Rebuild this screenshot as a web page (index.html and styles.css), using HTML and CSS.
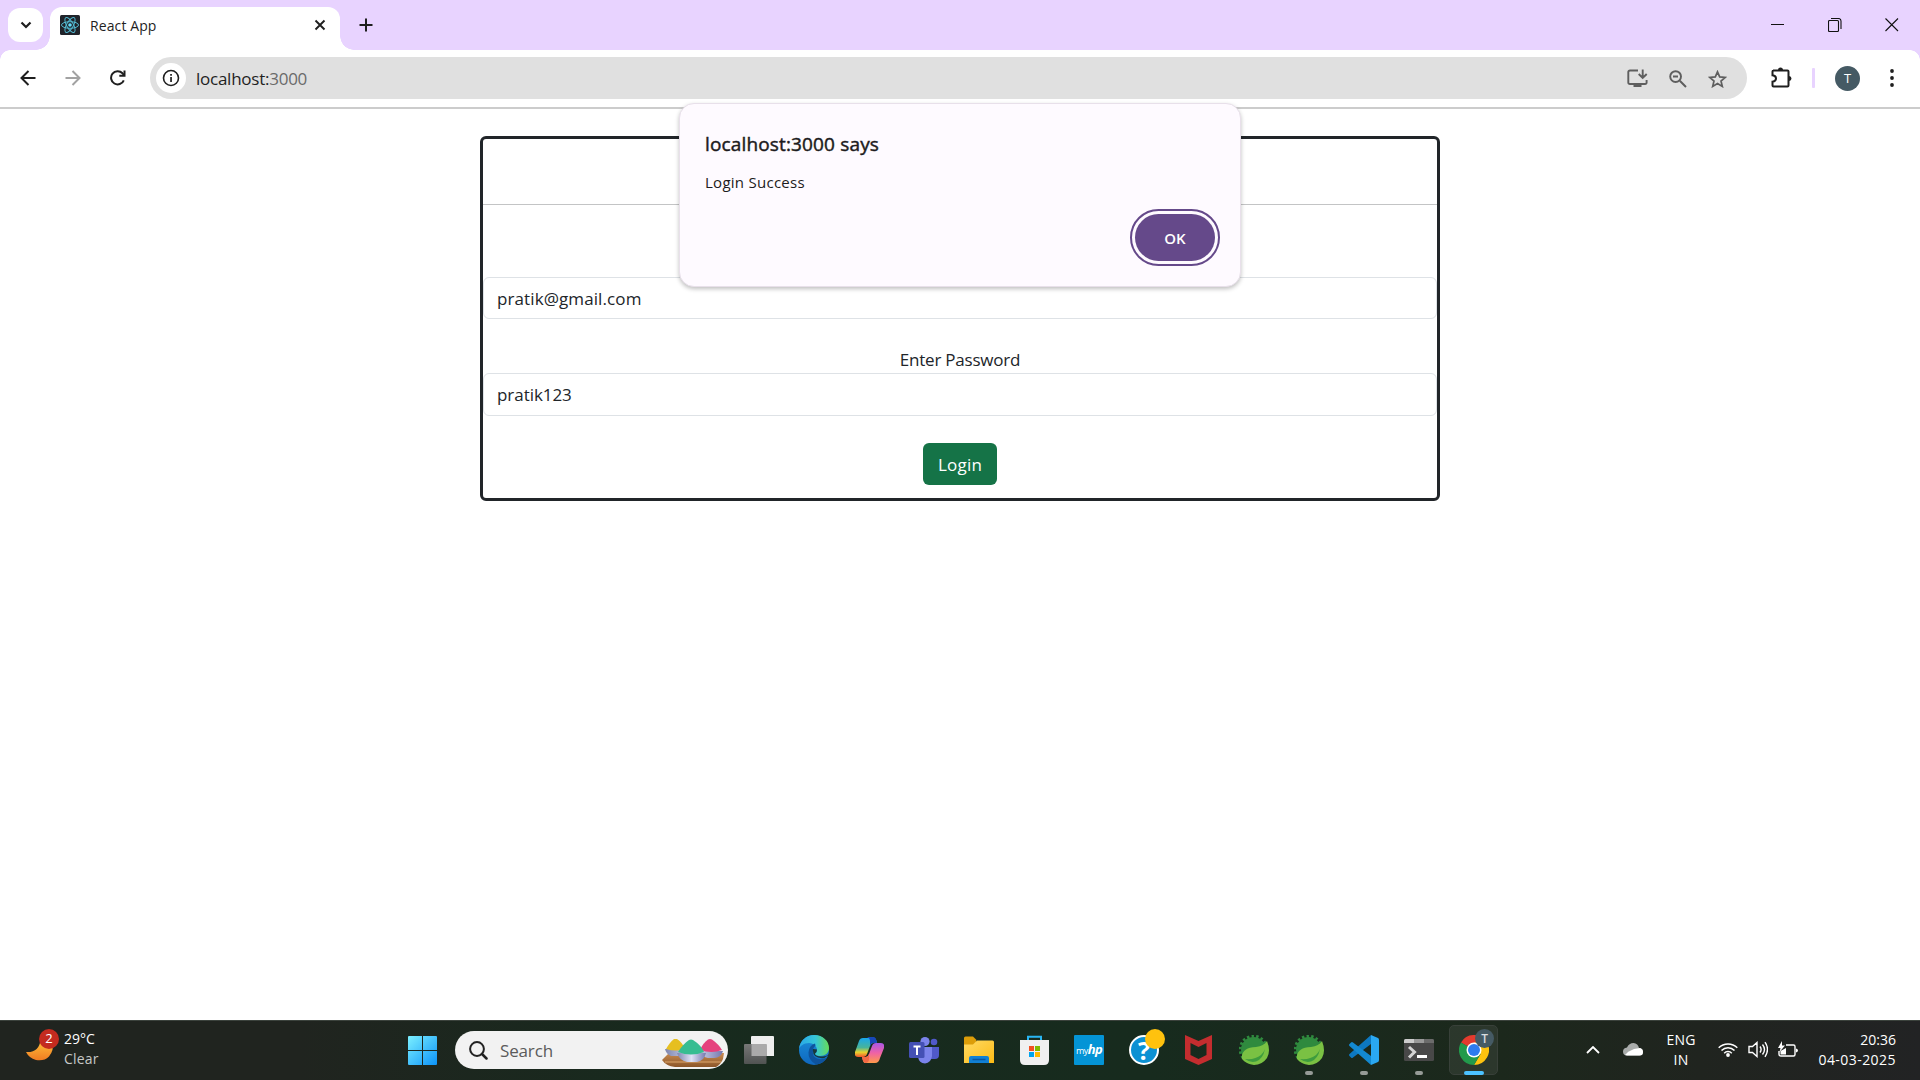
FILE: index.html
```html
<!DOCTYPE html>
<html lang="en">
<head>
<meta charset="utf-8">
<title>React App</title>
<link rel="stylesheet" href="styles.css">
</head>
<body>
<div class="screen">
  <header class="tabstrip">
    <button class="tab-search" aria-label="Search tabs"><svg width="12" height="8" viewBox="0 0 12 8"><path d="M1.5 1.5 6 6l4.500-4.500" fill="none" stroke="#1f1f1f" stroke-width="2.200"/></svg></button>
    <div class="tab">
      <svg class="favicon" width="20" height="20" viewBox="0 0 20 20"><rect width="20" height="20" rx="1.500" fill="#20232a"/><g fill="none" stroke="#53b9d1" stroke-width="1"><ellipse cx="10" cy="10" rx="8.500" ry="3.300"/><ellipse cx="10" cy="10" rx="8.500" ry="3.300" transform="rotate(60 10 10)"/><ellipse cx="10" cy="10" rx="8.500" ry="3.300" transform="rotate(120 10 10)"/></g><circle cx="10" cy="10" r="1.800" fill="#61dafb"/></svg>
      <span class="tab-title">React App</span>
      <svg class="tab-close" width="12" height="12" viewBox="0 0 12 12"><path d="M1.500 1.500l9 9m0-9l-9 9" stroke="#1f1f1f" stroke-width="1.900"/></svg>
    </div>
    <svg class="tab-new" width="14" height="14" viewBox="0 0 14 14"><path d="M7 .5v13M.5 7h13" stroke="#1f1f1f" stroke-width="2"/></svg>
    <div class="window-buttons">
      <svg width="14" height="14" viewBox="0 0 14 14"><path d="M0 6.500h13" stroke="#111" stroke-width="1"/></svg>
      <svg width="14" height="14" viewBox="0 0 14 14"><path d="M.5 3.500q0-1 1-1h8q1 0 1 1v9q0 1-1 1h-8q-1 0-1-1zM3 .5h7.500q2.500 0 2.500 2.500v8" fill="none" stroke="#111" stroke-width="1.100"/></svg>
      <svg width="14" height="14" viewBox="0 0 14 14"><path d="M.5.5l12.500 12.500m0-12.500L.5 13" stroke="#111" stroke-width="1.100"/></svg>
    </div>
  </header>
  <nav class="toolbar">
    <svg class="nav-icon" width="16" height="16" viewBox="0 0 16 16"><path d="M15.500 8H2M8.500 1 1.500 8l7 7" fill="none" stroke="#1f1f1f" stroke-width="2"/></svg>
    <svg class="nav-icon" width="16" height="16" viewBox="0 0 16 16"><path d="M.5 8H14M7.500 1l7 7-7 7" fill="none" stroke="#a2a2a2" stroke-width="2"/></svg>
    <svg class="nav-icon" width="16" height="16" viewBox="0 0 16 16"><path d="M13.800 10.300A6.600 6.600 0 1 1 12.500 3.300L14 5" fill="none" stroke="#1f1f1f" stroke-width="2"/><path d="M15.500.5v6.300H9.300v-2h4.200V.5z" fill="#1f1f1f"/></svg>
    <div class="omnibox">
      <span class="site-info"><svg width="18" height="18" viewBox="0 0 18 18"><circle cx="9" cy="9" r="7.500" fill="none" stroke="#1f1f1f" stroke-width="1.600"/><path d="M8.200 8h1.700v5H8.200zM8.200 5h1.700v1.700H8.200z" fill="#1f1f1f"/></svg></span>
      <span class="url">localhost:<span class="port">3000</span></span>
      <div class="omni-actions">
        <svg width="21" height="19" viewBox="0 0 21 19"><path d="M11 1.500H3Q1.300 1.500 1.300 3v10.500Q1.300 15 3 15h15q1.600 0 1.600-1.500V11M15.700.5v8.500m-4-4 4 4 4-4" fill="none" stroke="#5e5e5e" stroke-width="1.900"/><path d="M6.500 15h8v3h-8z" fill="#5e5e5e"/></svg>
        <svg width="18" height="18" viewBox="0 0 18 18"><path d="M10.800 10.800l6.200 6.200M4 6.500h5" stroke="#5e5e5e" stroke-width="2"/><circle cx="6.600" cy="6.600" r="5.400" fill="none" stroke="#5e5e5e" stroke-width="1.900"/></svg>
        <svg width="19" height="18" viewBox="0 0 19 18"><path d="M9.500 1.800l2.200 5.100 5.500.5-4.200 3.600 1.300 5.400-4.800-2.900-4.800 2.900L6 11 1.800 7.400l5.500-.5z" fill="none" stroke="#5e5e5e" stroke-width="1.700"/></svg>
      </div>
    </div>
    <svg class="extensions" width="21" height="21" viewBox="0 0 21 21"><path d="M2 3.500h14.500q1 0 1 1v14q0 1-1 1h-14q-1 0-1-1v-3.800q3.500-.5 3.500-3.200T1.500 8.300V4.500q0-1 1-1z" fill="none" stroke="#1f1f1f" stroke-width="2"/><path d="M7 3a2.500 2.500 0 0 1 5 0zM18 9a2.500 2.500 0 0 1 0 5z" fill="#1f1f1f"/></svg>
    <span class="divider"></span>
    <span class="avatar">T</span>
    <svg class="menu" width="4" height="18" viewBox="0 0 4 18"><g fill="#1f1f1f"><circle cx="2" cy="2" r="1.900"/><circle cx="2" cy="9" r="1.900"/><circle cx="2" cy="16" r="1.900"/></g></svg>
  </nav>
  <main class="page">
    <form class="card">
      <div class="card-header"></div>
      <div class="card-body">
        <div class="first-label"></div>
        <div class="field email">pratik@gmail.com</div>
        <label class="label">Enter Password</label>
        <div class="field password">pratik123</div>
        <button class="login" type="button">Login</button>
      </div>
    </form>
  </main>
  <footer class="taskbar">
    <div class="weather">
      <div class="moon"><svg width="30" height="26" viewBox="0 0 30 26"><defs><linearGradient id="mo" x1="0" y1="0" x2="0" y2="1"><stop offset="0" stop-color="#ffc03a"/><stop offset="1" stop-color="#f07c22"/></linearGradient></defs><path d="M0 12q13 1 14.500-12H27q1 11-4 16.500-5 5-13 3.500-7-2-10-8z" fill="url(#mo)"/></svg><span class="badge">2</span></div>
      <div class="weather-text"><span class="deg">29°C</span><span class="sky">Clear</span></div>
    </div>
    <svg class="start" width="29" height="29" viewBox="0 0 29 29"><defs><linearGradient id="win" x1="0" y1="0" x2="1" y2="1"><stop offset="0" stop-color="#7cf0ff"/><stop offset="1" stop-color="#0c93f9"/></linearGradient></defs><path d="M1 0h13v14H0V1q0-1 1-1zM15 0h13q1 0 1 1v13H15zM0 15h14v14H1q-1 0-1-1zM15 15h14v13q0 1-1 1H15z" fill="url(#win)"/></svg>
    <div class="search">
      <svg width="19" height="19" viewBox="0 0 19 19"><circle cx="8" cy="8" r="6.900" fill="none" stroke="#222" stroke-width="2"/><path d="M13 13l4.500 4.500" stroke="#222" stroke-width="2.500" stroke-linecap="round"/></svg>
      <span class="search-text">Search</span>
      <svg class="bowls" width="63" height="29" viewBox="0 0 63 29"><defs><linearGradient id="bo" x1="0" x2="1"><stop offset="0" stop-color="#7e86b0"/><stop offset=".5" stop-color="#dfe2f5"/><stop offset="1" stop-color="#7478ad"/></linearGradient><linearGradient id="wo" x1="0" y1="0" x2="0" y2="1"><stop offset="0" stop-color="#c98c50"/><stop offset="1" stop-color="#8b5529"/></linearGradient></defs><path d="M7 14h55l-1 6q-2 5-7 8H13Q4 27 0 21z" fill="url(#wo)"/><path d="M3 23h56" stroke="#dca66c" stroke-width="1"/><path d="M3 10h21q-1 6-8 7H9Q4 15 3 10zM38 12h23q-2 7-9 7h-6q-6-1-8-7z" fill="url(#bo)"/><path d="M4 10q4-7 8-10 1-1 3 0 5 3 8 10-9 3-19 0z" fill="#e6bf20"/><path d="M38 11q3-7 8-10.500 2-1 4 0 7 5 10 10.500-10 4-22 0z" fill="#e5417d"/><path d="M15 14h29q-2 8-9 9H25q-8-2-10-9z" fill="url(#bo)"/><path d="M16 13q5-8 11-12 2-1 4 0 8 5 11 12-13 5-26 0z" fill="#37bd91"/></svg>
    </div>
    <div class="apps">
      <div class="app"><svg width="30" height="30" viewBox="0 0 30 30"><defs><linearGradient id="tv" x1="0" y1="0" x2="0" y2="1"><stop offset="0" stop-color="#777"/><stop offset="1" stop-color="#505352"/></linearGradient></defs><path d="M8 1h21q1 0 1 1v19H7V2q0-1 1-1z" fill="#eee"/><rect y="9" width="22.500" height="20" rx="1" fill="url(#tv)"/><path d="M7.500 9h15v12h-15z" fill="#aaa"/></svg></div>
      <div class="app"><svg width="30" height="30" viewBox="0 0 30 30"><defs><linearGradient id="e1" x1="0" x2="1"><stop offset="0" stop-color="#29a7e8"/><stop offset=".55" stop-color="#36c6d8"/><stop offset="1" stop-color="#67dc58"/></linearGradient><linearGradient id="e2" x1="0" y1="0" x2="0" y2="1"><stop offset="0" stop-color="#1b8fda"/><stop offset="1" stop-color="#0f67be"/></linearGradient></defs><circle cx="15" cy="15" r="15" fill="url(#e2)"/><path d="M0 14C1 5 8 0 15 0c9 0 15 6 15 13 0 5-4 8-9 8-3 0-5-1-5-2 0-1 2-1 2-4 0-4-4-7-8-7-5 0-9 3-10 6z" fill="url(#e1)"/><path d="M16 8.500q-6 2-6.500 9Q9 25 17 29.500q8-1 11-7-5 3-10 1-5-2-4-8 0-3 2.500-5z" fill="#0e539d"/><path d="M14 14q-1 9 9 9.200 3 0 6-2.700L31 30v-12q-3 4-9 3.500-6-.5-6-3 2-1 2-4z" fill="#192b20" opacity=".85"/></svg></div>
      <div class="app"><svg width="29" height="26" viewBox="0 0 29 26"><defs><linearGradient id="c1" x1="0" y1="0" x2="0" y2="1"><stop offset="0" stop-color="#18a7ec"/><stop offset=".5" stop-color="#48b49a"/><stop offset=".75" stop-color="#e8d42e"/><stop offset="1" stop-color="#f3532d"/></linearGradient><linearGradient id="c2" x1="0" y1="0" x2="0" y2="1"><stop offset="0" stop-color="#a956e6"/><stop offset=".5" stop-color="#ef62a5"/><stop offset="1" stop-color="#ff9a49"/></linearGradient></defs><path d="M8 1h11q2 0 3 5h-4q-2 0-3 3l-3 8q-1 3-4 3H3q-4 0-3-5L4 4q1-3 4-3z" fill="url(#c1)"/><path d="M15 0h4q2 0 3 6h-4q-2 0-3 3V4q0-3-3-4z" fill="#1747b8"/><path d="M21 6h5q4 0 3 5l-4 10q-1 5-5 5h-10q-2 0-3-6h4q2 0 3-3l3-8q1-3 4-3z" fill="url(#c2)"/><path d="M7 20h4q2 0 3-3v5q0 4-4 4-2-1-3-6z" fill="#f36945"/></svg></div>
      <div class="app"><svg width="30" height="28" viewBox="0 0 30 28"><circle cx="25" cy="6" r="3.300" fill="#5059c9"/><circle cx="16" cy="5.500" r="4.600" fill="#7b83eb"/><path d="M22 11h8v8q0 4-4 4h-4z" fill="#5059c9"/><path d="M9 11h14v9q-1 7-7 7.500Q10 27 9 21z" fill="#7b83eb"/><rect y="6" width="15.500" height="16" rx="1.500" fill="#4450b5"/><path d="M4.500 9.500h7v2H9v7.500H7v-7.500H4.500z" fill="#fff"/></svg></div>
      <div class="app"><svg width="30" height="28" viewBox="0 0 30 28"><defs><linearGradient id="fo" x1="0" y1="0" x2="1" y2="1"><stop offset="0" stop-color="#ffda64"/><stop offset="1" stop-color="#fdbb15"/></linearGradient></defs><path d="M0 12V2q0-1.500 1.500-1.500H9l4 4h-1v7z" fill="#dc9d09"/><path d="M0 8.500h9l4-4h15.500Q30 4.500 30 6v21H0z" fill="url(#fo)"/><path d="M5 27v-5q0-2 2-2h16q2 0 2 2v5z" fill="#1180d4"/><path d="M8.500 23.500h13" stroke="#0a54a0" stroke-width="1.500"/></svg></div>
      <div class="app"><svg width="29" height="30" viewBox="0 0 29 30"><path d="M8 6V1.800h13V6" fill="none" stroke="#29b6f3" stroke-width="2"/><path d="M0 5h29v20q0 5-5 5H5q-5 0-5-5z" fill="#f0f0f0"/><path d="M9 11h5v5H9z" fill="#f25022"/><path d="M15 11h5v5h-5z" fill="#7fba00"/><path d="M9 17h5v5H9z" fill="#00a4ef"/><path d="M15 17h5v5h-5z" fill="#ffb900"/></svg></div>
      <div class="app"><span class="myhp">my<b>hp</b></span></div>
      <div class="app help"><span class="help-disc">?</span><span class="help-dot"></span></div>
      <div class="app"><svg width="27" height="30" viewBox="0 0 27 30"><path d="M0 0l13.500 6L27 0v24l-13.500 6L0 24zM5.500 8v12l8 4 8-4V8l-8 4z" fill="#c42d2f" fill-rule="evenodd"/></svg></div>
      <div class="app"><svg width="30" height="30" viewBox="0 0 30 30"><g id="spring"><circle cx="14.500" cy="14.500" r="12.500" fill="#2f8a3e"/><circle cx="14.500" cy="14.500" r="13.300" fill="none" stroke="#2f8a3e" stroke-width="3" stroke-dasharray="2.400 2.240"/><path d="M28 6q4 10 0 17-5 7-13 7-8-1-12-6-1-6 4-9.500 3-2.500 10-2.500 8-1 11-6z" fill="#7ac143"/><path d="M6 24q10 1 16-4 3-3 4-6-2 10-9 12.500-6 1.500-11-2.500z" fill="#3e9c3e"/></g></svg></div>
      <div class="app running"><svg width="30" height="30" viewBox="0 0 30 30"><use href="#spring"/></svg></div>
      <div class="app running"><svg width="30" height="30" viewBox="0 0 30 30"><path d="M22 0v9L4 22.500q-1 1-2 0L.5 21q-1-1 0-2z" fill="#0d78c1"/><path d="M22 30v-9L4 7.500q-1-1-2 0L.5 9q-1 1 0 2z" fill="#1389d1"/><path d="M22 0l7 3q1 .5 1 2v20q0 1.500-1 2l-7 3z" fill="#2aa8f2"/></svg></div>
      <div class="app running"><svg width="30" height="22" viewBox="0 0 30 22"><rect width="30" height="22" rx="1.500" fill="#484848"/><path d="M1.500 0H10v4H0V1.500Q0 0 1.500 0z" fill="#ccc"/><path d="M10 0h10v4H10z" fill="#999"/><path d="M20 0h8.500Q30 0 30 1.500V4H20z" fill="#6b6b6b"/><path d="M5 8l5.500 5L5 18.500" fill="none" stroke="#d4d4d4" stroke-width="3"/><path d="M13 16h10v3H13z" fill="#fff"/></svg></div>
      <div class="app active"><svg width="30" height="30" viewBox="0 0 30 30"><path d="M15 15L2 7.500A15 15 0 0 1 28 7.500z" fill="#e33b2e"/><path d="M15 15V7.500h13A15 15 0 0 1 15 30l6.500-11z" fill="#fdc20f"/><path d="M15 15l6.500 4L15 30A15 15 0 0 1 2 7.500z" fill="#229a4b"/><circle cx="15" cy="15" r="7.500" fill="#fff"/><circle cx="15" cy="15" r="6" fill="#2d7bee"/></svg><span class="profile">T</span></div>
    </div>
    <div class="tray">
      <svg class="chev" width="14" height="8" viewBox="0 0 14 8"><path d="M1 7l6-6 6 6" fill="none" stroke="#fff" stroke-width="1.800"/></svg>
      <svg class="cloud" width="20" height="13" viewBox="0 0 20 13"><path d="M4 12.500q-4 0-4-4Q0 5 4 4.500 6 0 10.500 0 15 .5 16 5q4 0 4 4 0 3.500-3.500 3.500z" fill="#a9acab"/><path d="M2 12q3-4 7-5l2-1 6-1q3 1 3 4 0 3.500-3.500 3.500H4z" fill="#fff"/></svg>
      <div class="lang"><span>ENG</span><span>IN</span></div>
      <svg class="wifi" width="20" height="15" viewBox="0 0 20 15"><g fill="none" stroke="#fff" stroke-width="1.500"><path d="M.7 5.800a13 13 0 0 1 18.600 0M3.500 8.600a9 9 0 0 1 13 0M6.200 11.200a5.300 5.300 0 0 1 7.600 0"/></g><circle cx="10" cy="13" r="1.900" fill="#fff"/></svg>
      <svg class="sound" width="20" height="17" viewBox="0 0 20 17"><path d="M1 5.500h3.500L9 1.500v14l-4.500-4H1zM12 5.500q2.200 3 0 6M14.500 3.500q4 5 0 10M17 1.200q5 7 0 14.600" fill="none" stroke="#fff" stroke-width="1.400"/></svg>
      <svg class="battery" width="20" height="17" viewBox="0 0 20 17"><path d="M8 4h7.500Q17 4 17 5.500v8q0 1.500-1.500 1.500H3Q1 15 1 13V10" fill="none" stroke="#fff" stroke-width="1.400"/><path d="M18 7.500q2 .5 2 2t-2 2zM2.500 10L8 7v6.500H2.500zM4 0L0 7h2.500L1.500 11 7 4.500H4z" fill="#fff"/></svg>
      <div class="clock"><span>20:36</span><span class="date">04-03-2025</span></div>
    </div>
  </footer>
  <section class="dialog">
    <h1>localhost:3000 says</h1>
    <p>Login Success</p>
    <button class="ok" type="button">OK</button>
  </section>
</div>
</body>
</html>
```
FILE: styles.css
```css
* { box-sizing: border-box; }
body { margin: 0; font-family: "Open Sans", "Noto Sans", sans-serif; color: #212529; overflow: hidden; }
button { font-family: inherit; border: 0; padding: 0; }
svg { display: block; flex: none; }
.screen { width: 1920px; height: 1080px; display: flex; flex-direction: column; position: relative; background: #fff; }

.tabstrip { height: 50px; background: #e8d3ff; display: flex; padding-left: 8px; }
.tab-search { width: 35px; height: 34px; margin-top: 8px; border-radius: 12px; background: #fff; display: flex; align-items: center; justify-content: center; }
.tab { position: relative; width: 290px; height: 43px; margin: 7px 0 0 7px; padding: 0 14px 7px 10px; display: flex; align-items: center; background: #fff; border-radius: 12px 12px 0 0; }
.tab::before, .tab::after { content: ""; position: absolute; bottom: 0; width: 14px; height: 14px; }
.tab::before { left: -14px; background: radial-gradient(circle at 0 0, transparent 13.500px, #fff 14px); }
.tab::after { right: -14px; background: radial-gradient(circle at 100% 0, transparent 13.500px, #fff 14px); }
.tab-title { margin-left: 10px; font-size: 14px; letter-spacing: .1px; color: #1f1f1f; }
.tab-close { margin-left: auto; }
.tab-new { margin: 18px 0 0 19px; }
.window-buttons { margin: 18px 21px 0 auto; display: flex; gap: 43px; }

.toolbar { height: 59px; display: flex; align-items: center; padding: 0 26px 2px 20px; border-bottom: 2px solid #ccc; background: radial-gradient(circle at 10px 10px, #fff 9.500px, #e8d3ff 10px) 0 0 / 10px 10px no-repeat, radial-gradient(circle at 0 10px, #fff 9.500px, #e8d3ff 10px) 100% 0 / 10px 10px no-repeat, #fff; }
.nav-icon { margin-right: 29px; }
.omnibox { width: 1597px; height: 42px; margin-left: -5px; border-radius: 21px; background: #e0e0e0; display: flex; align-items: center; padding: 0 20px 0 6px; margin-top: 1px; }
.site-info { width: 30px; height: 30px; border-radius: 50%; background: #fff; display: flex; align-items: center; justify-content: center; }
.url { margin-left: 10px; padding-top: 1px; font-size: 17px; letter-spacing: -.25px; color: #1f1f1f; white-space: nowrap; }
.port { color: #6a6a6a; }
.omni-actions { display: flex; align-items: center; gap: 21px; margin-left: auto; padding-top: 1px; }
.extensions { margin: -1px 0 0 24px; }
.divider { width: 3px; height: 20px; margin-left: 20px; border-radius: 1px; background: #e8d3ff; }
.avatar { width: 25px; height: 25px; margin: 1px 0 0 20px; border-radius: 50%; background: #455a64; color: #fff; font-size: 13px; display: flex; align-items: center; justify-content: center; }
.menu { margin: 1px 0 0 auto; }

.page { flex: 1; display: flex; flex-direction: column; align-items: center; padding-top: 27px; }
.card { width: 960px; height: 365px; border: 3px solid #212529; border-radius: 6px; display: flex; flex-direction: column; }
.card-header { height: 66px; border-bottom: 1px solid #c3c4c5; }
.card-body { display: flex; flex-direction: column; align-items: center; font-size: 17px; }
.first-label { height: 72px; }
.field { align-self: stretch; height: 42px; border: 1px solid #dee2e6; border-radius: 6px; padding-left: 13px; line-height: 42px; }
.email { letter-spacing: .1px; }
.password { height: 43px; letter-spacing: -.05px; }
.label { height: 26px; margin-top: 28px; line-height: 26px; letter-spacing: -.22px; }
.login { width: 74px; height: 42px; margin-top: 27px; border-radius: 6px; background: #157347; color: #fff; font-size: 17px; letter-spacing: .2px; }

.taskbar { height: 60px; display: flex; align-items: center; color: #fff; background: linear-gradient(90deg, #20241f 0, #20241f 300px, #182a1e 640px, #172b1e 1150px, #1c281c 1500px, #20241f 1700px, #222324 1920px); border-top: 1px solid #3b423c; }
.weather { width: 408px; padding-left: 26px; display: flex; align-items: center; margin-top: -3px; }
.moon { position: relative; width: 38px; height: 34px; padding-top: 8px; }
.badge { position: absolute; left: 13px; top: -3px; width: 20px; height: 20px; border-radius: 50%; background: #c42b1f; font-size: 13px; line-height: 19px; text-align: center; }
.weather-text, .lang, .clock { display: flex; flex-direction: column; font-size: 14px; line-height: 20px; }
.sky { color: #c6c8c6; letter-spacing: .2px; }
.search { width: 273px; height: 38px; margin: -1px 0 0 18px; border-radius: 19px; background: #f2f2f2; display: flex; align-items: center; padding: 0 3px 0 14px; }
.search-text { margin-left: 12px; font-size: 17px; letter-spacing: -.15px; color: #5b5b5b; }
.bowls { margin: 6px 0 0 auto; }
.apps { display: flex; margin: -1px 0 0 4px; }
.app { position: relative; width: 54.950px; height: 50px; display: flex; align-items: center; justify-content: center; }
.running::after, .active::after { content: ""; position: absolute; bottom: 0; width: 8px; height: 4px; border-radius: 2px; background: #969b97; }
.active::before { content: ""; position: absolute; inset: 0 3px; border: 1px solid #384039; border-radius: 5px; background: rgba(255,255,255,.07); }
.active svg { position: relative; }
.active::after { width: 20px; background: #4cc2ff; }
.profile { position: absolute; top: 4px; left: 29px; width: 19px; height: 19px; border-radius: 50%; background: #455a64; color: #d9dde0; font-size: 12px; font-weight: 600; line-height: 19px; text-align: center; }
.myhp { width: 30px; height: 30px; background: #0494d6; border-radius: 1px; font-size: 9px; line-height: 29px; text-align: center; letter-spacing: -.5px; }
.myhp b { font-size: 13px; font-style: italic; }
.help-disc { width: 30px; height: 30px; border: 2px solid #fff; border-radius: 50%; background: #0c91d3; font-size: 25px; font-weight: 700; line-height: 26px; text-align: center; }
.help-dot { position: absolute; left: 28px; top: 4px; width: 20px; height: 20px; border-radius: 50%; background: #ffc20e; }
.tray { display: flex; align-items: center; margin: -2px 0 0 auto; padding-right: 24px; }
.cloud { margin-left: 23px; }
.lang { width: 40px; margin-left: 18px; align-items: center; letter-spacing: .15px; }
.wifi { margin-left: 17px; }
.sound { margin-left: 10px; }
.battery { margin-left: 10px; }
.clock { width: 98px; align-items: flex-end; }
.date { letter-spacing: .45px; }

.dialog { position: absolute; left: 679px; top: 103px; width: 562px; height: 184px; padding: 26px 25px 0; border: 1px solid #e8e0ea; border-radius: 15px; background: #fefaff; box-shadow: 0 2px 4px rgba(0,0,0,.25); display: flex; flex-direction: column; color: #1d1b20; }
.dialog h1 { margin: 0; font-size: 19px; font-weight: 400; line-height: 29px; letter-spacing: .15px; -webkit-text-stroke: .45px #1d1b20; }
.dialog p { margin: 10px 0 0; font-size: 15px; line-height: 26px; letter-spacing: .27px; }
.ok { align-self: flex-end; flex: none; width: 80px; height: 47px; border-radius: 23.500px; background: #65498a; color: #fff; font-size: 15px; font-weight: 600; outline: 2px solid #65498a; outline-offset: 3px; margin-top: 19px; }
```
